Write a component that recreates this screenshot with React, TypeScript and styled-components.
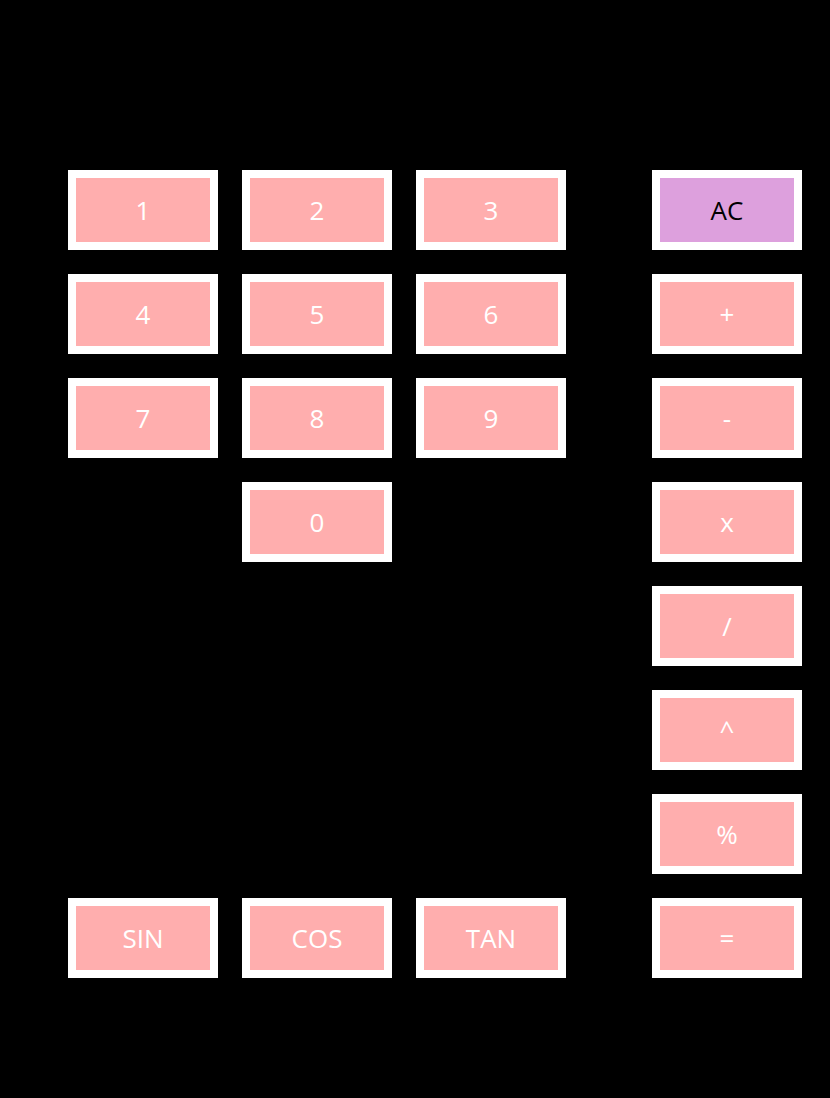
import React from 'react';
import styled, { createGlobalStyle } from 'styled-components';

const GlobalStyle = createGlobalStyle`
  html, body {
    margin: 0;
    padding: 0;
    background: #000;
  }
  body {
    font-family: 'Open Sans', 'Noto Sans', sans-serif;
  }
`;

const Page = styled.div`
  min-height: 1098px;
  background: #000;
  padding: 170px 0 0 68px;
  box-sizing: border-box;
  display: flex;
  gap: 86px;
  align-items: flex-start;
`;

const Pad = styled.div`
  display: grid;
  grid-template-columns: repeat(3, 150px);
  grid-template-rows: repeat(8, 80px);
  gap: 24px;
`;

const Operators = styled.div`
  display: flex;
  flex-direction: column;
  gap: 24px;
`;

type KeyProps = {
  $row?: number;
  $col?: number;
  $clear?: boolean;
};

const Key = styled.button<KeyProps>`
  grid-row: ${(p) => p.$row ?? 'auto'};
  grid-column: ${(p) => p.$col ?? 'auto'};
  width: 150px;
  height: 80px;
  box-sizing: border-box;
  border: 8px solid #fff;
  margin: 0;
  padding: 0 0 1px;
  background: ${(p) => (p.$clear ? '#dda0dd' : '#ffaeae')};
  color: ${(p) => (p.$clear ? '#000' : '#fff')};
  font-family: 'Open Sans', 'Noto Sans', sans-serif;
  font-size: 26px;
  display: flex;
  align-items: center;
  justify-content: center;
  cursor: pointer;
`;

const digits = [
  { label: '1', row: 1, col: 1 },
  { label: '2', row: 1, col: 2 },
  { label: '3', row: 1, col: 3 },
  { label: '4', row: 2, col: 1 },
  { label: '5', row: 2, col: 2 },
  { label: '6', row: 2, col: 3 },
  { label: '7', row: 3, col: 1 },
  { label: '8', row: 3, col: 2 },
  { label: '9', row: 3, col: 3 },
  { label: '0', row: 4, col: 2 },
  { label: 'SIN', row: 8, col: 1 },
  { label: 'COS', row: 8, col: 2 },
  { label: 'TAN', row: 8, col: 3 },
];

const ops = ['+', '-', 'x', '/', '^', '%', '='];

export default function App() {
  return (
    <>
      <GlobalStyle />
      <Page>
        <Pad>
          {digits.map((d) => (
            <Key key={d.label} $row={d.row} $col={d.col}>
              {d.label}
            </Key>
          ))}
        </Pad>
        <Operators>
          <Key $clear>AC</Key>
          {ops.map((op) => (
            <Key key={op}>{op}</Key>
          ))}
        </Operators>
      </Page>
    </>
  );
}
